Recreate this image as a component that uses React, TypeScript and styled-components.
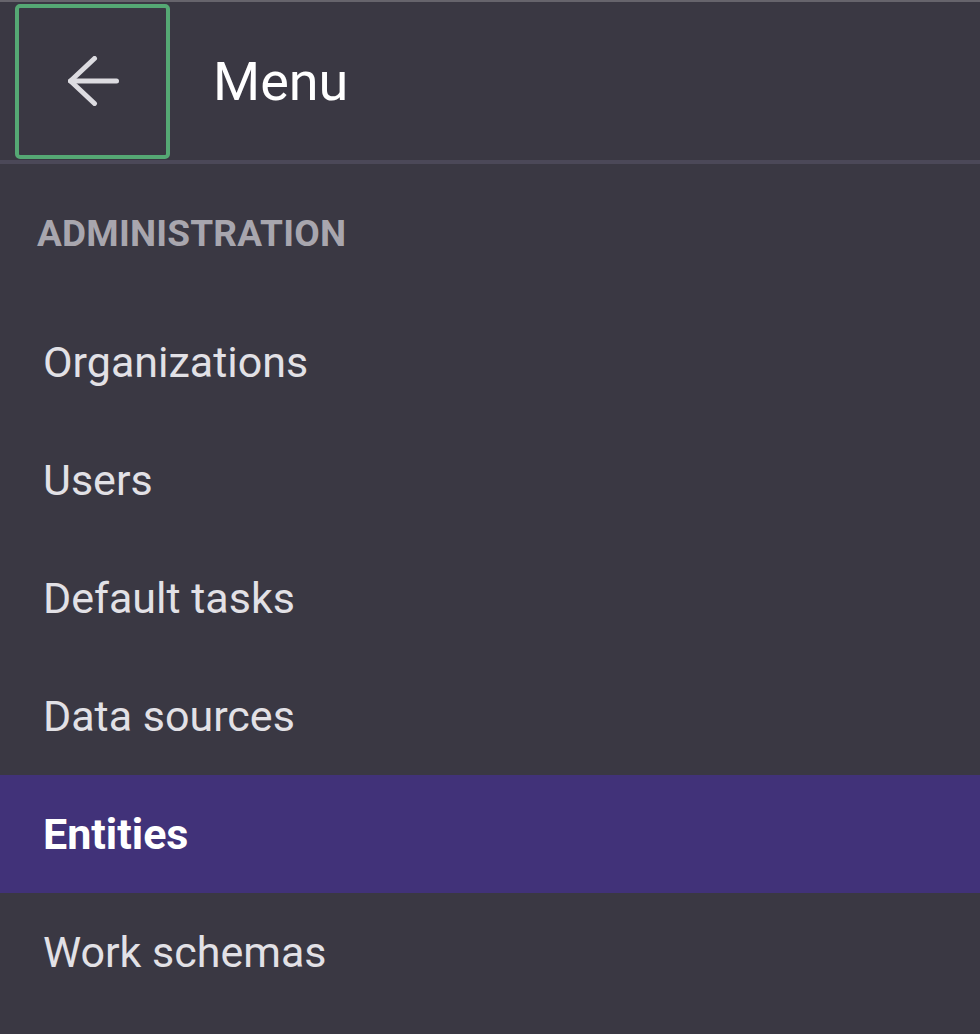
import styled, { createGlobalStyle } from 'styled-components'

const GlobalStyle = createGlobalStyle`
  html, body {
    margin: 0;
    padding: 0;
    background: #3a3843;
    font-family: Roboto, "Noto Sans", "Liberation Sans", sans-serif;
  }
`;

const Page = styled.div`
  min-height: 1034px;
  background: #3a3843;
  border-top: 2px solid #66646c;
`;

const Header = styled.header`
  display: flex;
  align-items: center;
  gap: 43px;
  height: 158px;
  padding: 0 15px;
  border-bottom: 4px solid #4b4858;
`;

const BackButton = styled.button`
  display: flex;
  align-items: center;
  justify-content: center;
  width: 155px;
  height: 155px;
  padding: 0 0 0 2px;
  background: transparent;
  border: 4px solid #55a874;
  border-radius: 5px;
  color: #dddce1;
  cursor: pointer;
`;

const Title = styled.h1`
  margin: 0;
  font-size: 54px;
  font-weight: 400;
  color: #ffffff;
`;

const SectionLabel = styled.div`
  display: flex;
  align-items: center;
  height: 139px;
  padding-left: 37px;
  font-size: 37px;
  font-weight: 700;
  color: #a8a6ae;
  letter-spacing: 0.2px;
`;

const List = styled.ul`
  list-style: none;
  margin: 0;
  padding: 0;
`;

const Item = styled.li<{ $active?: boolean }>`
  display: flex;
  align-items: center;
  height: 118px;
  padding-left: 43px;
  font-size: 43px;
  font-weight: ${p => (p.$active ? 700 : 400)};
  color: ${p => (p.$active ? '#ffffff' : '#e2e1e6')};
  background: ${p => (p.$active ? '#413279' : 'transparent')};
`;

const items = ['Organizations', 'Users', 'Default tasks', 'Data sources', 'Entities', 'Work schemas'];

export default function App() {
  return (
    <Page>
      <GlobalStyle />
      <Header>
        <BackButton aria-label="Back">
          <svg width="51" height="50" viewBox="0 0 51 50" fill="none" stroke="currentColor" strokeWidth="5" strokeLinecap="round" strokeLinejoin="round">
            <path d="M48.5 25H2.5" />
            <path d="M26.5 2.5 2.5 25l24 22.5" />
          </svg>
        </BackButton>
        <Title>Menu</Title>
      </Header>
      <SectionLabel>ADMINISTRATION</SectionLabel>
      <List>
        {items.map(name => (
          <Item key={name} $active={name === 'Entities'}>{name}</Item>
        ))}
      </List>
    </Page>
  )
}
